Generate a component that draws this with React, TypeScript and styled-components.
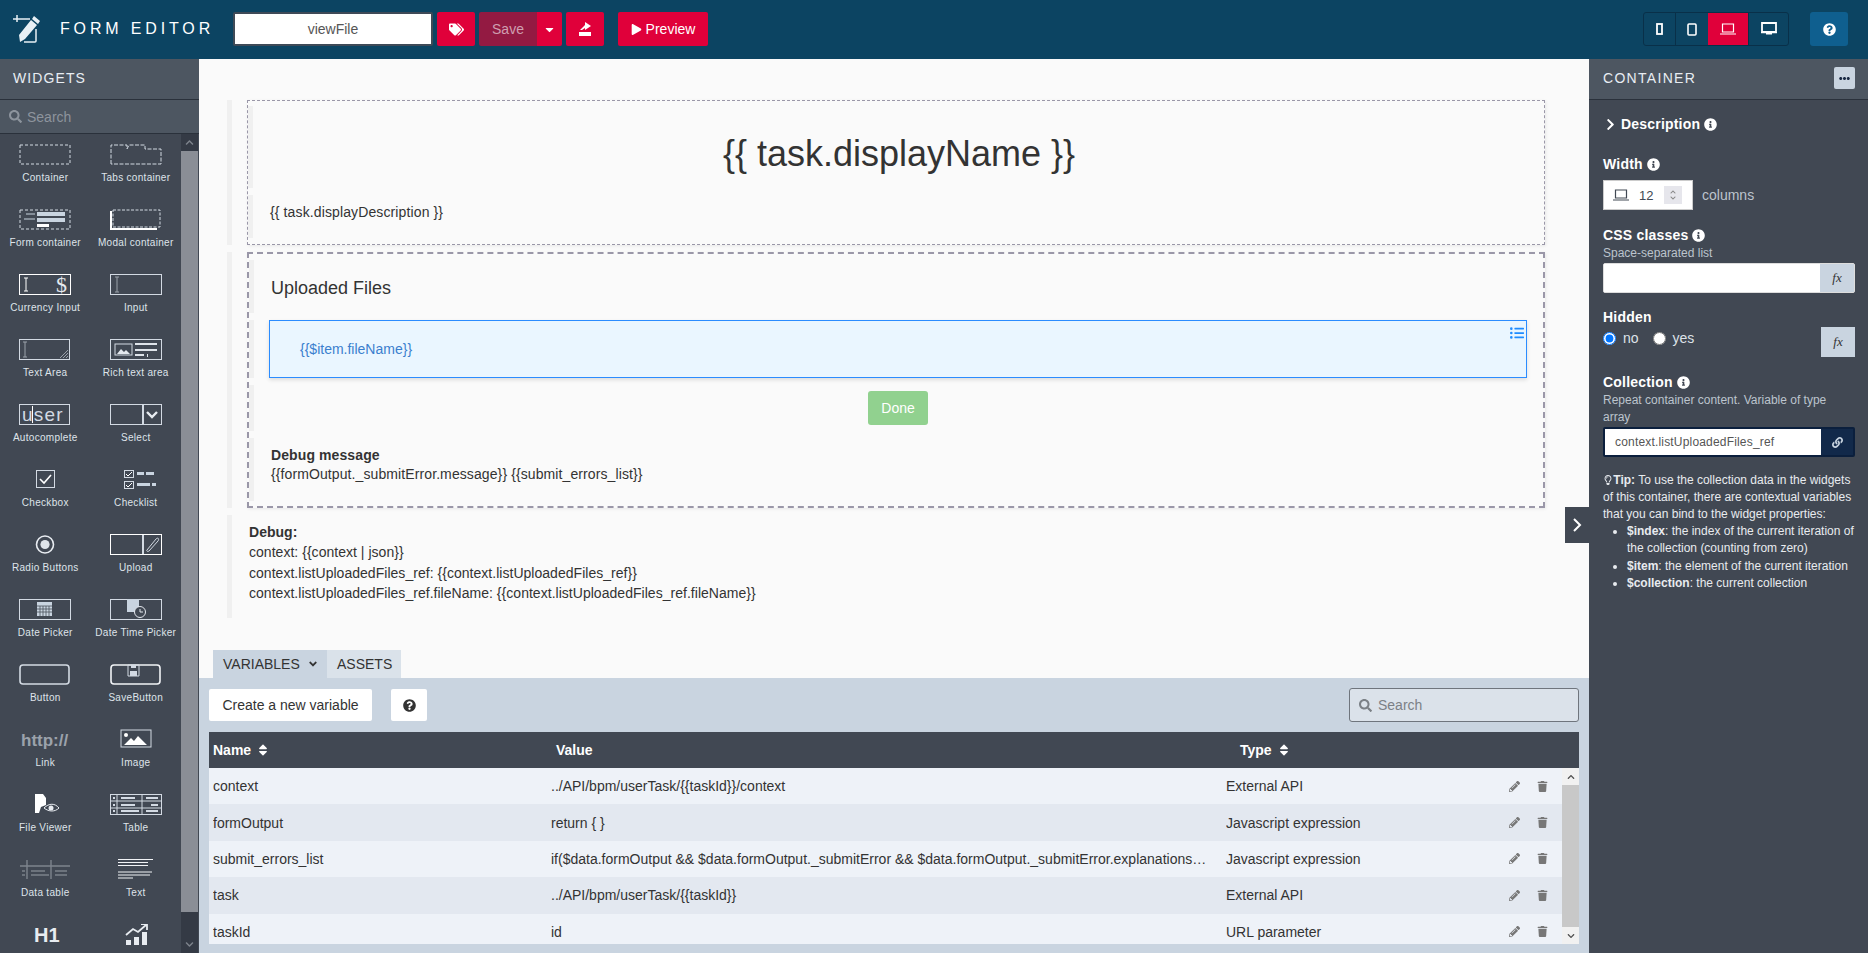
import React from "react";
import styled, { createGlobalStyle } from "styled-components";
import {
  FaTags, FaCaretDown, FaPlay, FaQuestionCircle, FaInfoCircle, FaChevronRight, FaChevronUp, FaChevronDown,
  FaSearch, FaSort, FaPencilAlt, FaTrash, FaLink, FaListUl, FaEllipsisH, FaRegLightbulb, FaAngleDown,
} from "react-icons/fa";

const Global = createGlobalStyle`
  html, body { margin: 0; padding: 0; height: 100%; overflow: hidden; }
  body { font-family: "Liberation Sans", Arial, sans-serif; font-size: 14px; color: #333; }
  * { box-sizing: border-box; }
`;

const Page = styled.div`
  width: 1868px;
  height: 953px;
  display: flex;
  flex-direction: column;
  overflow: hidden;
`;

/* top bar */
const TopBar = styled.header`
  height: 59px;
  background: #0c4462;
  display: flex;
  align-items: center;
  padding: 0 0 1px 12px;
  flex: none;
`;
const Logo = styled.svg`
  width: 30px;
  height: 32px;
  flex: none;
`;
const Brand = styled.div`
  color: #fff;
  font-size: 16px;
  letter-spacing: 3.85px;
  margin-left: 18px;
  width: 173px;
  white-space: nowrap;
`;
const NameBox = styled.div`
  width: 200px;
  height: 34px;
  background: #fff;
  border: 2px solid #3f4a57;
  border-radius: 2px;
  color: #555;
  font-size: 14px;
  display: flex;
  align-items: center;
  justify-content: center;
`;
const RedBtn = styled.div<{ $w: number; $ml?: number; $muted?: boolean; $joined?: boolean }>`
  width: ${(p) => p.$w}px;
  margin-left: ${(p) => p.$ml ?? 0}px;
  height: 34px;
  background: ${(p) => (p.$muted ? "#931a42" : "#e0003a")};
  color: ${(p) => (p.$muted ? "#cf9fb0" : "#fff")};
  border-radius: ${(p) => (p.$muted ? "2px 0 0 2px" : p.$joined ? "0 2px 2px 0" : "2px")};
  display: flex;
  align-items: center;
  justify-content: center;
  gap: 4px;
  font-size: 14px;
  flex: none;
`;
const Spacer = styled.div`
  flex: 1;
`;
const DeviceGroup = styled.div`
  display: flex;
  height: 34px;
  border: 1px solid #093049;
  border-radius: 3px;
  overflow: hidden;
`;
const DeviceBtn = styled.div<{ $w: number; $on?: boolean }>`
  width: ${(p) => p.$w}px;
  background: ${(p) => (p.$on ? "#e0003a" : "transparent")};
  border-left: ${(p) => (p.$on ? "none" : "1px solid #093049")};
  color: #fff;
  display: flex;
  align-items: center;
  justify-content: center;
  &:first-child { border-left: none; }
`;
const HelpBtn = styled.div`
  width: 38px;
  height: 34px;
  margin: 0 20px 0 21px;
  background: #0f5f8f;
  border-radius: 3px;
  color: #fff;
  display: flex;
  align-items: center;
  justify-content: center;
`;

const Body = styled.div`
  flex: 1;
  display: flex;
  min-height: 0;
`;

/* widgets */
const Side = styled.aside`
  width: 199px;
  background: #414853;
  display: flex;
  flex-direction: column;
  flex: none;
`;
const SideHead = styled.div`
  height: 41px;
  background: #4d5661;
  border-bottom: 1px solid #2a313b;
  color: #e8edf3;
  font-size: 14px;
  letter-spacing: 1.1px;
  padding: 0 13px 2px;
  display: flex;
  align-items: center;
  flex: none;
`;
const SideSearch = styled.div`
  height: 34px;
  background: #4d5661;
  border-bottom: 1px solid #2a313b;
  color: #8d949d;
  font-size: 14px;
  padding-left: 9px;
  display: flex;
  align-items: center;
  gap: 5px;
  flex: none;
`;
const SideBody = styled.div`
  flex: 1;
  display: flex;
  min-height: 0;
`;
const WidgetGrid = styled.div`
  width: 181px;
  display: grid;
  grid-template-columns: 1fr 1fr;
  grid-auto-rows: 65px;
  overflow: hidden;
`;
const WidgetCell = styled.div`
  display: flex;
  flex-direction: column;
  align-items: center;
  padding-top: 10px;
`;
const WidgetIcon = styled.svg`
  width: 52px;
  height: 21px;
  flex: none;
`;
const WidgetLabel = styled.div`
  margin-top: 7px;
  color: #dfe4ea;
  font-size: 10px;
  line-height: 12px;
  letter-spacing: 0.3px;
  white-space: nowrap;
`;
const FakeBar = styled.div`
  width: 17px;
  display: flex;
  flex-direction: column;
  background: #343a45;
  flex: none;
`;
const BarArrow = styled.div`
  height: 17px;
  display: flex;
  align-items: center;
  justify-content: center;
  color: #7d838c;
  flex: none;
`;
const BarThumb = styled.div<{ $h: number }>`
  height: ${(p) => p.$h}px;
  background: #8a8e96;
  flex: none;
`;

/* middle */
const Middle = styled.main`
  flex: 1;
  min-width: 0;
  display: flex;
  flex-direction: column;
  background: #fafafa;
`;
const Canvas = styled.div`
  flex: 1;
  position: relative;
  padding: 41px 44px 0 28px;
  display: flex;
  flex-direction: column;
  gap: 7px;
`;
const OuterRow = styled.div`
  border-left: 5px solid #f0f0f0;
  padding-left: 15px;
`;
const Box = styled.div<{ $thick?: boolean }>`
  border: ${(p) => (p.$thick ? "2px dashed #9a97a8" : "1px dashed #9a97a8")};
  padding: ${(p) => (p.$thick ? "6px 16px 5px 0" : "5px 16px 6px 0")};
  box-shadow: 1px 1px 3px rgba(0, 0, 0, 0.08);
  display: flex;
  flex-direction: column;
  gap: 7px;
`;
const InnerRow = styled.div<{ $h: number; $pt?: number }>`
  height: ${(p) => p.$h}px;
  border-left: 5px solid #f0f0f0;
  padding: ${(p) => p.$pt ?? 0}px 0 0 17px;
  display: flex;
  flex-direction: column;
`;
const Title = styled.h1`
  margin: 0;
  font-weight: 400;
  font-size: 36px;
  line-height: 40px;
  text-align: center;
  color: #333;
`;
const Description = styled.div`
  line-height: 20px;
  letter-spacing: 0.12px;
`;
const Subhead = styled.h3`
  margin: 0;
  font-weight: 400;
  font-size: 18px;
  line-height: 22px;
  color: #333;
`;
const Repeat = styled.div`
  margin-left: -2px;
  height: 58px;
  position: relative;
  border: 1px solid #2b8cff;
  background: #eaf6ff;
  box-shadow: 0 2px 4px rgba(0, 0, 0, 0.12);
  color: #3b7fce;
  padding-left: 30px;
  display: flex;
  align-items: center;
`;
const RepeatMark = styled.div`
  position: absolute;
  top: 4px;
  right: 0;
  width: 18px;
  height: 16px;
  color: #1f8cff;
  display: flex;
  align-items: center;
  justify-content: center;
`;
const DoneBtn = styled.div`
  align-self: center;
  width: 60px;
  height: 34px;
  margin: 6px 0 0 -2px;
  background: #91d18f;
  color: #fff;
  border-radius: 3px;
  display: flex;
  align-items: center;
  justify-content: center;
`;
const TextLines = styled.div`
  line-height: 19px;
  padding-top: 8px;
  letter-spacing: 0.1px;
`;
const DebugBlock = styled.div`
  border-left: 5px solid #f0f0f0;
  padding: 7px 0 15px 17px;
  line-height: 20.3px;
  letter-spacing: 0.03px;
`;
const Toggle = styled.div`
  position: absolute;
  right: 0;
  top: 448px;
  width: 24px;
  height: 36px;
  background: #414853;
  color: #fff;
  display: flex;
  align-items: center;
  justify-content: center;
`;

/* bottom */
const Tabs = styled.div`
  height: 28px;
  padding-left: 14px;
  display: flex;
  flex: none;
`;
const Tab = styled.div<{ $w: number; $on?: boolean }>`
  width: ${(p) => p.$w}px;
  background: ${(p) => (p.$on ? "#c9d4e0" : "#dae2ea")};
  color: #333;
  padding-left: 10px;
  display: flex;
  align-items: center;
  gap: 7px;
`;
const Panel = styled.section`
  height: 275px;
  background: #c9d4e0;
  padding: 10px 10px 9px 10px;
  display: flex;
  flex-direction: column;
  flex: none;
`;
const PanelBar = styled.div`
  height: 34px;
  display: flex;
  align-items: center;
  margin-bottom: 10px;
  flex: none;
`;
const PlainBtn = styled.div<{ $w: number; $ml?: number }>`
  width: ${(p) => p.$w}px;
  margin-left: ${(p) => p.$ml ?? 0}px;
  height: 32px;
  background: #fff;
  border-radius: 2px;
  color: #333;
  display: flex;
  align-items: center;
  justify-content: center;
`;
const VarSearch = styled.div`
  margin-left: auto;
  width: 230px;
  height: 34px;
  border: 1px solid #6f757d;
  border-radius: 3px;
  background: #dbe2ea;
  color: #7b8086;
  padding-left: 9px;
  display: flex;
  align-items: center;
  gap: 6px;
`;
const TableHead = styled.div`
  height: 36px;
  background: #414853;
  color: #fff;
  font-weight: 700;
  padding-left: 4px;
  display: grid;
  grid-template-columns: 343px 684px 1fr;
  align-items: center;
  flex: none;
`;
const HeadCell = styled.div`
  display: flex;
  align-items: center;
  gap: 5px;
`;
const TableBody = styled.div`
  flex: 1;
  display: flex;
  min-height: 0;
`;
const Rows = styled.div`
  flex: 1;
  min-width: 0;
  overflow: hidden;
`;
const Row = styled.div<{ $odd: boolean }>`
  height: 36.4px;
  background: ${(p) => (p.$odd ? "#eef2f8" : "#e3e8f0")};
  padding-left: 4px;
  display: grid;
  grid-template-columns: 338px 658px 17px 1fr 28px 25px;
  align-items: center;
  color: #333;
`;
const Cell = styled.div`
  white-space: nowrap;
  overflow: hidden;
  text-overflow: ellipsis;
`;
const RowIcon = styled.div`
  color: #777;
  display: flex;
  align-items: center;
`;
const TableBar = styled.div`
  width: 17px;
  background: #f1f1f1;
  display: flex;
  flex-direction: column;
  flex: none;
`;
const TableArrow = styled.div`
  height: 17px;
  color: #505050;
  display: flex;
  align-items: center;
  justify-content: center;
  flex: none;
`;
const TableThumb = styled.div`
  flex: 1;
  background: #c8c8c8;
`;

/* properties */
const Props = styled.aside`
  width: 279px;
  background: #414853;
  color: #fff;
  display: flex;
  flex-direction: column;
  flex: none;
`;
const PropsHead = styled.div`
  height: 41px;
  background: #4d5661;
  border-bottom: 1px solid #2a313b;
  padding: 0 13px 2px 14px;
  color: #e8edf3;
  font-size: 14px;
  letter-spacing: 1.3px;
  display: flex;
  align-items: center;
  justify-content: space-between;
  flex: none;
`;
const MenuBtn = styled.div`
  width: 21px;
  height: 22px;
  background: #c9d4e0;
  border-radius: 2px;
  color: #1a2a44;
  display: flex;
  align-items: center;
  justify-content: center;
`;
const PropsBody = styled.div`
  padding: 14px 13px 0 14px;
`;
const Label = styled.div<{ $mt?: number }>`
  margin-top: ${(p) => p.$mt ?? 15}px;
  font-weight: 700;
  font-size: 14px;
  line-height: 20px;
  letter-spacing: 0.2px;
  display: flex;
  align-items: center;
  gap: 4px;
`;
const DescChevron = styled(FaChevronRight)`
  margin-left: 1px;
`;
const Hint = styled.div`
  color: #bcc4cd;
  font-size: 12px;
  line-height: 17px;
`;
const WidthRow = styled.div`
  margin-top: 6px;
  display: flex;
  align-items: center;
  gap: 9px;
  color: #bcc4cd;
  font-size: 14px;
`;
const WidthBox = styled.div`
  width: 90px;
  height: 30px;
  background: #fff;
  border: 1px solid #ccc;
  color: #414853;
  padding-left: 9px;
  display: flex;
  align-items: center;
  font-size: 13px;
`;
const WidthValue = styled.span`
  margin-left: 10px;
  width: 25px;
`;
const Spin = styled.span`
  width: 18px;
  height: 18px;
  background: #e6e6ec;
  color: #888;
  display: flex;
  flex-direction: column;
  align-items: center;
  justify-content: center;
`;
const FieldRow = styled.div<{ $dark?: boolean }>`
  height: 30px;
  margin-top: 1px;
  display: flex;
  background: ${(p) => (p.$dark ? "#12294a" : "#fff")};
  border: ${(p) => (p.$dark ? "2px solid #0b1f3d" : "1px solid #ddd")};
  border-radius: 2px;
`;
const FieldInput = styled.div`
  flex: 1;
  background: #fff;
  color: #555;
  font-size: 12px;
  letter-spacing: 0.18px;
  padding-left: 10px;
  display: flex;
  align-items: center;
`;
const Addon = styled.div<{ $w: number; $dark?: boolean; $h?: number }>`
  width: ${(p) => p.$w}px;
  height: ${(p) => (p.$h ? p.$h + "px" : "auto")};
  background: ${(p) => (p.$dark ? "#12294a" : "#c9d4e0")};
  color: ${(p) => (p.$dark ? "#c9d4e0" : "#333")};
  display: flex;
  align-items: center;
  justify-content: center;
  font-family: "Liberation Serif", serif;
  font-style: italic;
  font-size: 13px;
  flex: none;
`;
const RadioRow = styled.div`
  display: flex;
  justify-content: space-between;
  align-items: flex-start;
  height: 30px;
`;
const Radios = styled.label`
  display: flex;
  align-items: center;
  height: 22px;
  color: #dde2e8;
  font-size: 14px;
`;
const Radio = styled.input`
  width: 13px;
  height: 13px;
  margin: 0 7px 0 0;
`;
const RadioText = styled.span`
  margin-right: 14px;
`;
const Tip = styled.div`
  margin-top: 15px;
  font-size: 12px;
  line-height: 17px;
  color: #e8ebef;
`;
const TipIcon = styled(FaRegLightbulb)`
  margin-right: -3px;
  vertical-align: -1px;
`;
const TipList = styled.ul`
  margin: 0;
  padding-left: 24px;
  & li { margin-bottom: 0.6px; }
`;

const line = "#d3dae3";
const dim = "#9ba2ab";

const MobileGlyph = () => (
  <svg width="7" height="12" viewBox="0 0 7 12">
    <rect x="1" y="1" width="5" height="10" fill="none" stroke="currentColor" strokeWidth="1.8" />
  </svg>
);
const TabletGlyph = () => (
  <svg width="10" height="13" viewBox="0 0 10 13">
    <rect x="1" y="1" width="8" height="11" rx="1" fill="none" stroke="currentColor" strokeWidth="1.6" />
  </svg>
);
const LaptopGlyph = () => (
  <svg width="16" height="12" viewBox="0 0 16 12">
    <path d="M2.5 1h11v8h-11z" fill="none" stroke="currentColor" strokeWidth="1.200" />
    <path d="M0 10.500h16v1H0z" fill="currentColor" />
  </svg>
);
const DesktopGlyph = () => (
  <svg width="16" height="14" viewBox="0 0 16 14">
    <path d="M1 1h14v9H1z" fill="none" stroke="currentColor" strokeWidth="1.800" />
    <path d="M5 11h6v1.500H5z" fill="currentColor" />
    <path d="M0 10h16v1.200H0z" fill="currentColor" />
  </svg>
);

const WIDGETS: { label: string; icon: React.ReactNode }[] = [
  { label: "Container", icon: <rect x="1" y="1" width="50" height="19" fill="none" stroke={line} strokeDasharray="3 2" /> },
  { label: "Tabs container", icon: <path d="M1 20V1h16v4l2-4h16v4h16v15z" fill="none" stroke={line} strokeDasharray="4 1.5" /> },
  {
    label: "Form container",
    icon: (
      <>
        <rect x="1" y="1" width="50" height="19" fill="none" stroke={line} strokeDasharray="3 2" />
        <path d="M18 3h28v4H18zM18 9h28v4H18z" fill="#c9d4e0" />
        <path d="M7 5h9M5 10h11" stroke="#c9d4e0" />
        <rect x="18" y="15" width="12" height="3" fill="#fff" />
      </>
    ),
  },
  {
    label: "Modal container",
    icon: (
      <>
        <rect x="3" y="1" width="47" height="17" fill="none" stroke={line} strokeDasharray="3 1.5" />
        <path d="M1 2v18h46" fill="none" stroke="#fff" strokeWidth="2" />
      </>
    ),
  },
  {
    label: "Currency Input",
    icon: (
      <>
        <rect x="0.5" y="0.5" width="51" height="20" fill="none" stroke="#fff" />
        <path d="M5 4h4M5 17h4M7 4v13" stroke="#fff" fill="none" />
        <text x="37" y="18" fontSize="22" fontFamily="Liberation Serif, serif" fill="#e4e8ee">$</text>
      </>
    ),
  },
  {
    label: "Input",
    icon: (
      <>
        <rect x="0.5" y="0.5" width="51" height="20" fill="none" stroke={line} />
        <path d="M5 3h4M5 18h4M7 3v15" stroke={dim} fill="none" />
      </>
    ),
  },
  {
    label: "Text Area",
    icon: (
      <>
        <rect x="0.5" y="0.5" width="50" height="20" fill="none" stroke={line} />
        <path d="M4 3h4M4 18h4M6 3v15" stroke={dim} fill="none" />
        <path d="M41 19l8-8M44 19l5-5M47 19l2-2" stroke={dim} />
      </>
    ),
  },
  {
    label: "Rich text area",
    icon: (
      <>
        <rect x="0.5" y="0.5" width="51" height="20" fill="none" stroke={line} />
        <rect x="5" y="5" width="17" height="11" fill="none" stroke={line} />
        <path d="M7 15l4-5 3 3 2-2 4 4z" fill="#e4e8ee" />
        <path d="M25 4h22v2H25zM25 10h22v2H25zM25 15h9v2H25zM37 15h1v3h-1z" fill="#dfe4ea" />
      </>
    ),
  },
  {
    label: "Autocomplete",
    icon: (
      <>
        <rect x="0.5" y="0.5" width="50" height="20" fill="none" stroke={line} />
        <text x="3" y="17" fontSize="19" fontFamily="Liberation Sans, sans-serif" letterSpacing="1.2" fill={line}>user</text>
        <path d="M13.500 2v17" stroke="#fff" />
      </>
    ),
  },
  {
    label: "Select",
    icon: (
      <>
        <rect x="0.5" y="0.5" width="51" height="20" fill="none" stroke={line} />
        <path d="M33 1v19" stroke={line} strokeWidth="2" />
        <path d="M37 8l5 5 5-5" fill="none" stroke="#e8ecf1" strokeWidth="2.4" />
      </>
    ),
  },
  {
    label: "Checkbox",
    icon: (
      <>
        <rect x="17.5" y="1.5" width="18" height="17" fill="none" stroke={line} />
        <path d="M21 10l4 4 7-8" fill="none" stroke="#fff" strokeWidth="1.6" />
      </>
    ),
  },
  {
    label: "Checklist",
    icon: (
      <>
        <rect x="14.5" y="1.5" width="9" height="7" fill="none" stroke={line} />
        <rect x="14.5" y="12.5" width="9" height="7" fill="none" stroke={line} />
        <path d="M16 5l2 2 4-4M16 16l2 2 4-4" fill="none" stroke="#fff" />
        <path d="M27 3h7v3h-7zM36 3h8v3h-8zM27 14h13v3H27zM42 14h4v3h-4z" fill="#c9d4e0" />
      </>
    ),
  },
  {
    label: "Radio Buttons",
    icon: (
      <>
        <circle cx="26" cy="10.5" r="8.5" fill="none" stroke="#e8ecf1" strokeWidth="1.6" />
        <circle cx="26" cy="10.5" r="4.6" fill="#dfe4ea" />
      </>
    ),
  },
  {
    label: "Upload",
    icon: (
      <>
        <rect x="0.5" y="0.5" width="51" height="20" fill="none" stroke="#fff" />
        <path d="M33 1v19" stroke={line} strokeWidth="2" />
        <path d="M37 16l9-11c2-2 3.500 0 2 2l-9 10c-1.500 1-3 0-2-1z" fill="none" stroke={line} />
      </>
    ),
  },
  {
    label: "Date Picker",
    icon: (
      <>
        <rect x="0.5" y="0.5" width="51" height="20" fill="none" stroke={line} />
        <rect x="18" y="3" width="15" height="14" fill="#c9d4e0" />
        <path d="M18 7h15M21 7v10M24 7v10M27 7v10M30 7v10M18 10h15M18 13h15" stroke="#4a515c" strokeWidth="0.8" />
      </>
    ),
  },
  {
    label: "Date Time Picker",
    icon: (
      <>
        <rect x="0.5" y="0.5" width="51" height="20" fill="none" stroke={line} />
        <rect x="17" y="0" width="12" height="13" fill="#c9d4e0" />
        <circle cx="30" cy="13" r="5.500" fill="#414853" stroke="#e4e8ee" />
        <path d="M30 10v3h3" stroke="#e4e8ee" fill="none" />
      </>
    ),
  },
  { label: "Button", icon: <rect x="1" y="1" width="49" height="19" rx="3" fill="none" stroke={line} strokeWidth="1.6" /> },
  {
    label: "SaveButton",
    icon: (
      <>
        <rect x="1" y="1" width="49" height="19" rx="3" fill="none" stroke="#f1f3f6" strokeWidth="1.6" />
        <path d="M18 1h11v11H18z" fill="none" stroke={line} />
        <path d="M20 7h7v5h-7zM21 1h5v3h-5z" fill={line} />
      </>
    ),
  },
  { label: "Link", icon: <text x="2" y="17" fontSize="17" fontWeight="700" fontFamily="Liberation Sans, sans-serif" fill={dim}>http://</text> },
  {
    label: "Image",
    icon: (
      <>
        <rect x="11" y="1" width="30" height="17" fill="none" stroke={line} />
        <circle cx="16" cy="6" r="2" fill="#fff" />
        <path d="M14 16l7-7 3 3 4-5 9 9z" fill="#fff" />
      </>
    ),
  },
  {
    label: "File Viewer",
    icon: (
      <>
        <path d="M16 0h8l3 4v7l-5 2-2 6h-4z" fill="#fff" />
        <path d="M25 14c5-5 11-5 15 0-4 4-10 4-15 0z" fill="none" stroke="#e8ecf1" />
        <circle cx="32" cy="14" r="2.500" fill="#e8ecf1" />
      </>
    ),
  },
  {
    label: "Table",
    icon: (
      <>
        <rect x="0.5" y="0.5" width="51" height="20" fill="none" stroke={line} />
        <path d="M1 7h50M1 14h50M7 1v19M32 1v19" stroke={line} />
        <path d="M11 3h14v2H11zM36 3h12v2H36zM11 10h14v2H11zM41 10h7v2h-7zM11 16h18v2H11zM36 16h12v2H36zM3 3h2v2H3zM3 10h2v2H3zM3 16h2v2H3z" fill={line} />
      </>
    ),
  },
  {
    label: "Data table",
    icon: (
      <>
        <path d="M1 7h50M8 1v19M32 1v19" stroke="#7d848d" strokeWidth="1.4" />
        <path d="M12 11h14v2H12zM36 11h12v2H36zM12 15h18v2H12zM36 15h12v2H36zM3 11h3v2H3zM3 15h3v2H3z" fill="#6c737c" />
      </>
    ),
  },
  { label: "Text", icon: <path d="M8 0.500h35M8 3.500h30M8 6.500h30M8 13h34M8 16h32M8 19h15" stroke="#f1f3f6" /> },
  { label: "Header", icon: <text x="15" y="18" fontSize="20" fontWeight="700" fontFamily="Liberation Sans, sans-serif" fill="#e8ecf1">H1</text> },
  {
    label: "Chart",
    icon: (
      <>
        <path d="M16 21v-5h5v5zM24 21v-8h5v8zM32 21V8h5v13z" fill="#e8ecf1" />
        <path d="M16 11l7-6 5 3 8-7M31 0h6v6" fill="none" stroke="#e8ecf1" strokeWidth="1.8" />
      </>
    ),
  },
];

const VARS = [
  ["context", "../API/bpm/userTask/{{taskId}}/context", "External API"],
  ["formOutput", "return { }", "Javascript expression"],
  [
    "submit_errors_list",
    "if($data.formOutput && $data.formOutput._submitError && $data.formOutput._submitError.explanations) { return $data.formOutput._submitError.explanations; }",
    "Javascript expression",
  ],
  ["task", "../API/bpm/userTask/{{taskId}}", "External API"],
  ["taskId", "id", "URL parameter"],
];

export default function App() {
  return (
    <Page>
      <Global />
      <TopBar>
        <Logo viewBox="0 0 30 32">
          <path d="M5 2v7M1 6h17M24 16v12a1 1 0 0 1-1 1H12" fill="none" stroke="#e8f0f5" strokeWidth="1.500" />
          <path d="M8 29l-1-7L19 7l6 5-12 14zM20 6l2-3 6 5-2 3z" fill="#e8f0f5" />
        </Logo>
        <Brand>FORM EDITOR</Brand>
        <NameBox>viewFile</NameBox>
        <RedBtn $w={38} $ml={4}><FaTags size={15} /></RedBtn>
        <RedBtn $w={58} $ml={4} $muted>Save</RedBtn>
        <RedBtn $w={25} $joined><FaCaretDown size={13} /></RedBtn>
        <RedBtn $w={38} $ml={4}>
          <svg width="16" height="16" viewBox="0 0 16 16">
            <path d="M2 11h12v4H2z" fill="#fff" />
            <path d="M3 9l5-5V1l6 4-6 4V7l-3 2z" fill="#fff" />
          </svg>
        </RedBtn>
        <RedBtn $w={90} $ml={14}><FaPlay size={11} />Preview</RedBtn>
        <Spacer />
        <DeviceGroup>
          <DeviceBtn $w={31}><MobileGlyph /></DeviceBtn>
          <DeviceBtn $w={33}><TabletGlyph /></DeviceBtn>
          <DeviceBtn $w={40} $on><LaptopGlyph /></DeviceBtn>
          <DeviceBtn $w={40}><DesktopGlyph /></DeviceBtn>
        </DeviceGroup>
        <HelpBtn><FaQuestionCircle size={13} /></HelpBtn>
      </TopBar>
      <Body>
        <Side>
          <SideHead>WIDGETS</SideHead>
          <SideSearch><FaSearch size={13} />Search</SideSearch>
          <SideBody>
            <WidgetGrid>
              {WIDGETS.map((w) => (
                <WidgetCell key={w.label}>
                  <WidgetIcon viewBox="0 0 52 21">{w.icon}</WidgetIcon>
                  <WidgetLabel>{w.label}</WidgetLabel>
                </WidgetCell>
              ))}
            </WidgetGrid>
            <FakeBar>
              <BarArrow><FaChevronUp size={9} /></BarArrow>
              <BarThumb $h={761} />
              <Spacer />
              <BarArrow><FaChevronDown size={9} /></BarArrow>
            </FakeBar>
          </SideBody>
        </Side>
        <Middle>
          <Canvas>
            <OuterRow>
              <Box>
                <InnerRow $h={82} $pt={28}><Title>{"{{ task.displayName }}"}</Title></InnerRow>
                <InnerRow $h={43} $pt={7}><Description>{"{{ task.displayDescription }}"}</Description></InnerRow>
              </Box>
            </OuterRow>
            <OuterRow>
              <Box $thick>
                <InnerRow $h={53} $pt={17}><Subhead>Uploaded Files</Subhead></InnerRow>
                <InnerRow $h={58}>
                  <Repeat>
                    {"{{$item.fileName}}"}
                    <RepeatMark><FaListUl size={14} /></RepeatMark>
                  </Repeat>
                </InnerRow>
                <InnerRow $h={46}><DoneBtn>Done</DoneBtn></InnerRow>
                <InnerRow $h={63}>
                  <TextLines>
                    <b>Debug message</b>
                    <br />
                    {"{{formOutput._submitError.message}} {{submit_errors_list}}"}
                  </TextLines>
                </InnerRow>
              </Box>
            </OuterRow>
            <DebugBlock>
              <b>Debug:</b>
              <br />
              {"context: {{context | json}}"}
              <br />
              {"context.listUploadedFiles_ref: {{context.listUploadedFiles_ref}}"}
              <br />
              {"context.listUploadedFiles_ref.fileName: {{context.listUploadedFiles_ref.fileName}}"}
            </DebugBlock>
            <Toggle>
              <svg width="10" height="16" viewBox="0 0 10 16">
                <path d="M2 2l6 6-6 6" fill="none" stroke="currentColor" strokeWidth="2" />
              </svg>
            </Toggle>
          </Canvas>
          <Tabs>
            <Tab $w={114} $on>VARIABLES <FaAngleDown size={12} /></Tab>
            <Tab $w={74}>ASSETS</Tab>
          </Tabs>
          <Panel>
            <PanelBar>
              <PlainBtn $w={163}>Create a new variable</PlainBtn>
              <PlainBtn $w={36} $ml={19}><FaQuestionCircle size={13} /></PlainBtn>
              <VarSearch><FaSearch size={13} />Search</VarSearch>
            </PanelBar>
            <TableHead>
              <HeadCell>Name <FaSort size={14} /></HeadCell>
              <HeadCell>Value</HeadCell>
              <HeadCell>Type <FaSort size={14} /></HeadCell>
            </TableHead>
            <TableBody>
              <Rows>
                {VARS.map((v, i) => (
                  <Row key={v[0]} $odd={i % 2 === 0}>
                    <Cell>{v[0]}</Cell>
                    <Cell>{v[1]}</Cell>
                    <span />
                    <Cell>{v[2]}</Cell>
                    <RowIcon><FaPencilAlt size={11} /></RowIcon>
                    <RowIcon><FaTrash size={11} /></RowIcon>
                  </Row>
                ))}
              </Rows>
              <TableBar>
                <TableArrow><FaChevronUp size={8} /></TableArrow>
                <TableThumb />
                <TableArrow><FaChevronDown size={8} /></TableArrow>
              </TableBar>
            </TableBody>
          </Panel>
        </Middle>
        <Props>
          <PropsHead>
            CONTAINER
            <MenuBtn><FaEllipsisH size={11} /></MenuBtn>
          </PropsHead>
          <PropsBody>
            <Label $mt={0}><DescChevron size={13} />Description <FaInfoCircle size={13} /></Label>
            <Label $mt={20}>Width <FaInfoCircle size={13} /></Label>
            <WidthRow>
              <WidthBox>
                <LaptopGlyph />
                <WidthValue>12</WidthValue>
                <Spin><FaChevronUp size={6} /><FaChevronDown size={6} /></Spin>
              </WidthBox>
              columns
            </WidthRow>
            <Label>CSS classes <FaInfoCircle size={13} /></Label>
            <Hint>Space-separated list</Hint>
            <FieldRow>
              <FieldInput />
              <Addon $w={34}>fx</Addon>
            </FieldRow>
            <Label $mt={14}>Hidden</Label>
            <RadioRow>
              <Radios>
                <Radio type="radio" name="hidden" defaultChecked />
                <RadioText>no</RadioText>
                <Radio type="radio" name="hidden" />
                <RadioText>yes</RadioText>
              </Radios>
              <Addon $w={34} $h={30}>fx</Addon>
            </RadioRow>
            <Label>Collection <FaInfoCircle size={13} /></Label>
            <Hint>Repeat container content. Variable of type array</Hint>
            <FieldRow $dark>
              <FieldInput>context.listUploadedFiles_ref</FieldInput>
              <Addon $w={32} $dark><FaLink size={11} /></Addon>
            </FieldRow>
            <Tip>
              <TipIcon size={10} /> <b>Tip:</b> To use the collection data in the widgets of this container, there
              are contextual variables that you can bind to the widget properties:
              <TipList>
                <li><b>$index</b>: the index of the current iteration of the collection (counting from zero)</li>
                <li><b>$item</b>: the element of the current iteration</li>
                <li><b>$collection</b>: the current collection</li>
              </TipList>
            </Tip>
          </PropsBody>
        </Props>
      </Body>
    </Page>
  );
}
